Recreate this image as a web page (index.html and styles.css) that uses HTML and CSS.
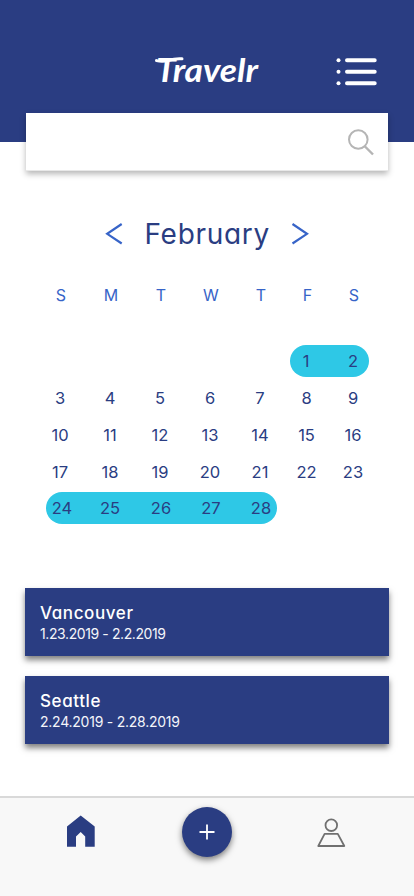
FILE: index.html
```html
<!DOCTYPE html>
<html lang="en">
<head>
<meta charset="utf-8">
<title>Travelr</title>
<link rel="stylesheet" href="styles.css">
</head>
<body>
<div class="app">
  <header class="header">
    <svg class="logo" width="112" height="50" viewBox="0 0 112 50"><text x="5" y="35" textLength="102" lengthAdjust="spacingAndGlyphs">Travelr</text><path d="M5.5 13.6Q12 15 18 13.2T31 11.8" fill="none" stroke="#fff" stroke-width="3" stroke-linecap="round"/></svg>
    <svg class="menu" width="42" height="30" viewBox="0 0 42 30">
      <g fill="#fff"><circle cx="2.5" cy="3.2" r="2"/><circle cx="2.5" cy="14.7" r="2"/><circle cx="2.5" cy="26.2" r="2"/></g>
      <path d="M11 3.2H38.7M11 14.7H38.7M11 26.2H38.7" stroke="#fff" stroke-width="4" stroke-linecap="round"/>
    </svg>
  </header>
  <div class="search">
    <svg width="28" height="28" viewBox="0 0 28 28" fill="none" stroke="#b5b5b5" stroke-width="2"><circle cx="11.3" cy="11.5" r="9.3"/><path d="M17.5 18L26 26.5" stroke-width="2.4"/></svg>
  </div>
  <main>
    <div class="month">
      <svg width="17" height="22" viewBox="0 0 17 22"><path d="M15.7 1L1.2 10.8L15.7 20.5"/></svg>
      <h1>February</h1>
      <svg width="17" height="22" viewBox="0 0 17 22"><path d="M0.5 1L15 10.8L0.5 20.5"/></svg>
    </div>
    <div class="week names"><span>S</span><span>M</span><span>T</span><span>W</span><span>T</span><span>F</span><span>S</span></div>
    <div class="days">
      <div class="range first"><span>1</span><span>2</span></div>
      <div class="week"><span>3</span><span>4</span><span>5</span><span>6</span><span>7</span><span>8</span><span>9</span></div>
      <div class="week"><span>10</span><span>11</span><span>12</span><span>13</span><span>14</span><span>15</span><span>16</span></div>
      <div class="week"><span>17</span><span>18</span><span>19</span><span>20</span><span>21</span><span>22</span><span>23</span></div>
      <div class="range last"><span>24</span><span>25</span><span>26</span><span>27</span><span>28</span></div>
    </div>
    <section class="trips">
      <article class="trip"><h2>Vancouver</h2><p class="short">1.23.2019 - 2.2.2019</p></article>
      <article class="trip"><h2>Seattle</h2><p>2.24.2019 - 2.28.2019</p></article>
    </section>
  </main>
  <nav class="tabs">
    <svg class="home" width="28" height="32" viewBox="0 0 28 32"><path d="M13.7 0.5L27.7 11.5V31.7H18.2V21.5L13.7 17L9 21.5V31.7H0V11.5Z" fill="#2a3d82"/></svg>
    <div class="add"><svg width="16" height="16" viewBox="0 0 16 16"><path d="M8 0.5V15.5M0.5 8H15.5" stroke="#fff" stroke-width="1.8"/></svg></div>
    <svg class="user" width="28" height="29" viewBox="0 0 28 29" fill="none" stroke="#707070" stroke-width="1.8"><circle cx="13.3" cy="7.2" r="5.8"/><path d="M6.6 15.8H19.8L26.3 28H0.3Z" stroke-linejoin="round"/></svg>
  </nav>
</div>
</body>
</html>
```
FILE: styles.css
```css
* { box-sizing: border-box; }
body { margin: 0; background: #fff; font-family: Inter, "Liberation Sans", sans-serif; font-feature-settings: "cv11"; color: #2a3d82; }
h1, h2, p { margin: 0; }
svg { display: block; flex: none; overflow: visible; }
.app { width: 414px; height: 896px; display: flex; flex-direction: column; overflow: hidden; }
.header { height: 142px; flex: none; background: #2a3d82; display: flex; align-items: flex-start; padding: 47px 36px 0 151px; justify-content: space-between; }
.logo text { font: italic 700 32px Lato, sans-serif; fill: #fff; }
.menu { margin-top: 10px; }
.search { flex: none; height: 58px; margin: -29px 26px 0; background: #fff; box-shadow: 0 3px 6px rgba(0,0,0,.29); border-bottom: 1px solid #e8e8e8; display: flex; align-items: center; justify-content: flex-end; padding-right: 13px; }
main { flex: 1; padding-top: 45px; }
.month { display: flex; justify-content: center; align-items: center; height: 36px; gap: 22px; }
.month path { fill: none; stroke: #3764c8; stroke-width: 2.2; }
.month h1 { width: 125px; font-size: 28px; font-weight: 400; line-height: 35px; letter-spacing: .7px; white-space: nowrap; }
.week { display: grid; grid-template-columns: repeat(5, 50px) 43px 50px; margin-left: 35px; height: 32px; line-height: 32px; text-align: center; }
.names { margin-left: 36px; margin-top: 27px; font-size: 16px; color: #3764c8; }
.days { margin-top: 34px; display: grid; row-gap: 5px; font-size: 16.5px; }
.range { display: grid; height: 32px; line-height: 32px; border-radius: 16px; background: #2ec8e6; text-align: center; }
.first { width: 79px; margin-left: 290px; grid-template-columns: 32px 62px; }
.last { width: 231px; margin-left: 46px; margin-top: -1px; grid-template-columns: 32px 64px 38px 62px 38px; }
.trips { margin: 64px 25px 0; display: grid; gap: 20px; }
.trip { height: 68px; padding: 14px 15px 0; background: #2a3d82; color: #fff; box-shadow: 0 4px 6px rgba(0,0,0,.5); }
.trip h2 { font-size: 17px; font-weight: 500; line-height: 22px; letter-spacing: .6px; }
.trip p { font-size: 14px; line-height: 19px; color: #f4f5fa; white-space: nowrap; letter-spacing: -.24px; }
.trip .short { letter-spacing: -.4px; }
.tabs { flex: none; height: 100px; background: #f8f8f8; border-top: 2px solid #d9d9d9; display: flex; justify-content: space-between; padding: 0 68px 0 67px; }
.home { margin-top: 17px; }
.add { width: 50px; height: 50px; margin-top: 9px; border-radius: 50%; background: #2a3d82; box-shadow: 0 3px 6px rgba(0,0,0,.5); display: flex; align-items: center; justify-content: center; }
.user { margin-top: 20px; }
```
